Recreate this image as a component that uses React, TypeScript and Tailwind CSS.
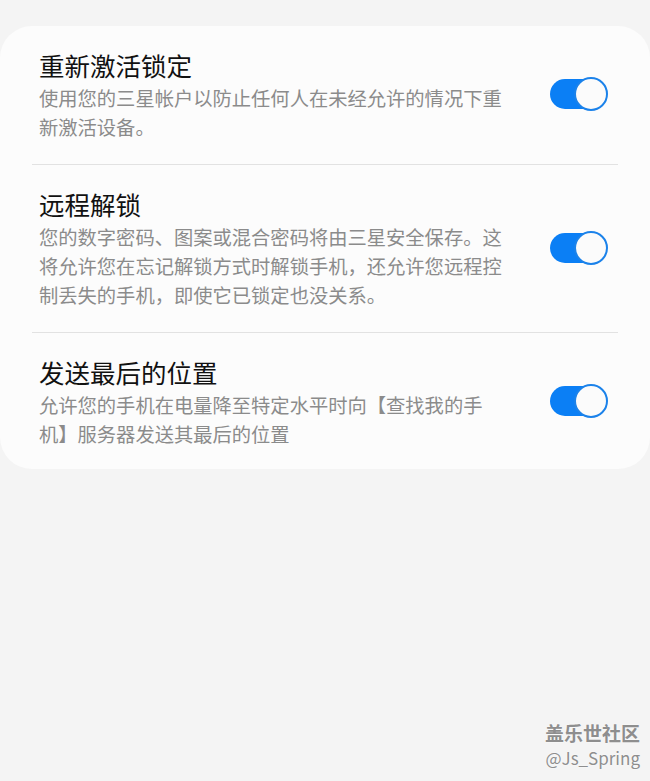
import React from "react";

const font = { fontFamily: '"Noto Sans CJK SC", "Noto Sans", sans-serif' };

function Toggle() {
  return (
    <div className="relative h-[34px] w-[58px] shrink-0 -translate-y-[1px]">
      <div className="absolute left-0 top-[2px] h-[30px] w-[50px] rounded-full bg-[#0b7ff5]" />
      <div className="absolute right-0 top-0 h-[34px] w-[34px] rounded-full border-2 border-[#1b82ea] bg-[#fbfbfb]" />
    </div>
  );
}

function Row({ title, lines, last }: { title: string; lines: string[]; last?: boolean }) {
  return (
    <div className={`flex items-center justify-between pt-[22px] pl-[7px] pr-[10px] ${last ? "pb-[20px]" : "pb-[22px]"}`}>
      <div className="flex flex-col">
        <div className="text-[25.5px] leading-[34px] text-[#111111]">{title}</div>
        <div className="mt-[2px] text-[19.3px] leading-[29px] text-[#8b8b8b]">
          {lines.map((l, i) => (
            <div key={i} className="whitespace-nowrap">{l}</div>
          ))}
        </div>
      </div>
      <Toggle />
    </div>
  );
}

export default function App() {
  return (
    <div className="relative h-[781px] w-[650px] overflow-hidden bg-[#f4f4f4]" style={font}>
      <div className="pt-[26px]">
        <div className="rounded-[32px] bg-[#fcfcfc] px-[32px]">
          <Row
            title="重新激活锁定"
            lines={["使用您的三星帐户以防止任何人在未经允许的情况下重", "新激活设备。"]}
          />
          <div className="h-[1px] bg-[#e2e2e2]" />
          <Row
            title="远程解锁"
            lines={[
              "您的数字密码、图案或混合密码将由三星安全保存。这",
              "将允许您在忘记解锁方式时解锁手机，还允许您远程控",
              "制丢失的手机，即使它已锁定也没关系。",
            ]}
          />
          <div className="h-[1px] bg-[#e2e2e2]" />
          <Row
            title="发送最后的位置"
            last
            lines={["允许您的手机在电量降至特定水平时向【查找我的手", "机】服务器发送其最后的位置"]}
          />
        </div>
      </div>
      <div className="absolute right-[10px] top-[720px] flex flex-col items-end text-[#8e8e8e]">
        <div className="text-[19px] leading-[26px] font-semibold" style={{ textShadow: "0 0 2px #ffffff" }}>盖乐世社区</div>
        <div className="text-[17px] leading-[24px]" style={{ textShadow: "0 0 2px #ffffff" }}>@Js_Spring</div>
      </div>
    </div>
  );
}
